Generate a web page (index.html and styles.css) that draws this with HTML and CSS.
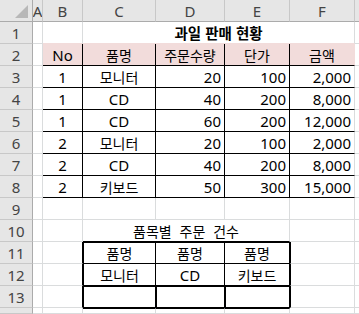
FILE: index.html
```html
<!DOCTYPE html>
<html lang="ko">
<head>
<meta charset="utf-8">
<link rel="stylesheet" href="styles.css">
</head>
<body>
<div class="sheet">
  <!-- header row -->
  <div class="corner"><span class="tri"></span></div>
  <div class="h">A</div><div class="h">B</div><div class="h">C</div><div class="h">D</div><div class="h">E</div><div class="h">F</div><div class="h last"></div>

  <!-- row 1 -->
  <div class="rh">1</div><div class="c"></div><div class="c pinkb"></div>
  <div class="c title pinkb span4">과일 판매 현황</div><div class="c g"></div>

  <!-- row 2 -->
  <div class="rh">2</div><div class="c"></div>
  <div class="c ph ctr br bb">No</div>
  <div class="c ph ctr br bb ko">품명</div>
  <div class="c ph ctr br bb ko">주문수량</div>
  <div class="c ph ctr br bb ko">단가</div>
  <div class="c ph ctr bb ko">금액</div>
  <div class="c g"></div>

  <!-- rows 3-8 -->
  <div class="rh">3</div><div class="c"></div>
  <div class="c ctr br bb">1</div><div class="c ctr br bb ko">모니터</div><div class="c num br bb">20</div><div class="c num br bb">100</div><div class="c num bb">2,000</div><div class="c g"></div>

  <div class="rh">4</div><div class="c"></div>
  <div class="c ctr br bb">1</div><div class="c ctr br bb">CD</div><div class="c num br bb">40</div><div class="c num br bb">200</div><div class="c num bb">8,000</div><div class="c g"></div>

  <div class="rh">5</div><div class="c"></div>
  <div class="c ctr br bb">1</div><div class="c ctr br bb">CD</div><div class="c num br bb">60</div><div class="c num br bb">200</div><div class="c num bb">12,000</div><div class="c g"></div>

  <div class="rh">6</div><div class="c"></div>
  <div class="c ctr br bb">2</div><div class="c ctr br bb ko">모니터</div><div class="c num br bb">20</div><div class="c num br bb">100</div><div class="c num bb">2,000</div><div class="c g"></div>

  <div class="rh">7</div><div class="c"></div>
  <div class="c ctr br bb">2</div><div class="c ctr br bb">CD</div><div class="c num br bb">40</div><div class="c num br bb">200</div><div class="c num bb">8,000</div><div class="c g"></div>

  <div class="rh">8</div><div class="c"></div>
  <div class="c ctr br bb">2</div><div class="c ctr br bb ko">키보드</div><div class="c num br bb">50</div><div class="c num br bb">300</div><div class="c num bb">15,000</div><div class="c g"></div>

  <!-- row 9 -->
  <div class="rh">9</div><div class="c"></div><div class="c"></div><div class="c"></div><div class="c"></div><div class="c"></div><div class="c"></div><div class="c g"></div>

  <!-- row 10 -->
  <div class="rh">10</div><div class="c"></div><div class="c"></div>
  <div class="c ctr span3 bb ko caption">품목별 주문 건수</div>
  <div class="c"></div><div class="c g"></div>

  <!-- row 11 -->
  <div class="rh">11</div><div class="c"></div><div class="c br"></div>
  <div class="c ctr bt bl br bb ko">품명</div>
  <div class="c ctr bt br bb ko">품명</div>
  <div class="c ctr bt br bb ko">품명</div>
  <div class="c bl"></div><div class="c g"></div>

  <!-- row 12 -->
  <div class="rh">12</div><div class="c"></div><div class="c br"></div>
  <div class="c ctr bl br bb ko">모니터</div>
  <div class="c ctr br bb">CD</div>
  <div class="c ctr br bb ko">키보드</div>
  <div class="c bl"></div><div class="c g"></div>

  <!-- row 13 -->
  <div class="rh">13</div><div class="c"></div><div class="c br"></div>
  <div class="c bt bl br bb"></div>
  <div class="c bt bl br bb"></div>
  <div class="c bt bl br bb"></div>
  <div class="c bl"></div><div class="c g"></div>

  <!-- row 14 (partial) -->
  <div class="rh"></div><div class="c"></div><div class="c"></div>
  <div class="c bt"></div><div class="c bt"></div><div class="c bt"></div>
  <div class="c"></div><div class="c g"></div>
</div>
</body>
</html>
```

FILE: styles.css
```css
html, body {
  margin: 0;
  padding: 0;
  background: #ffffff;
  overflow: hidden;
}

.sheet {
  display: grid;
  grid-template-columns: 33px 10px 40px 73px 69px 65px 65px 4px;
  grid-template-rows: repeat(14, 22px) 6px;
  width: 359px;
  height: 314px;
  font-family: "Noto Sans", "Noto Sans CJK KR", sans-serif;
  font-size: 15px;
  color: #000;
  line-height: 20px;
}

.sheet > div {
  box-sizing: border-box;
  white-space: nowrap;
  overflow: hidden;
}

.ko {
  font-family: "Noto Sans CJK KR", sans-serif;
  font-size: 14px;
}
.caption {
  word-spacing: 4px;
}

/* header row */
.corner {
  position: relative;
  background: #e6e6e6;
  border-right: 1px solid #ababab;
  border-bottom: 1px solid #ababab;
}
.tri {
  position: absolute;
  right: 4px;
  bottom: 3px;
  width: 0;
  height: 0;
  border-left: 13px solid transparent;
  border-bottom: 13px solid #b8b8b8;
}

.h {
  background: #e6e6e6;
  border-right: 1px solid #c8c8c8;
  border-bottom: 1px solid #ababab;
  display: flex;
  align-items: center;
  justify-content: center;
  color: #444;
  font-size: 15px;
}
.h.last {
  border-right: none;
}

.rh {
  background: #e6e6e6;
  border-right: 1px solid #ababab;
  border-bottom: 1px solid #c8c8c8;
  display: flex;
  align-items: center;
  justify-content: center;
  color: #444;
  font-size: 15px;
}

/* cells */
.c {
  border-right: 1px solid #dadcdd;
  border-bottom: 1px solid #dadcdd;
  display: flex;
  align-items: center;
  padding: 0 3px;
}
.c.g {
  border-right: none;
}

.ctr { justify-content: center; }
.num { justify-content: flex-end; }

.title {
  justify-content: center;
  font-family: "Noto Sans CJK KR", sans-serif;
  font-weight: bold;
  font-size: 14.5px;
}
.span4 { grid-column: span 4; }
.span3 { grid-column: span 3; }

.ph {
  background: #f2dcdb;
  border-right-color: #f2dcdb;
}
.pinkb { border-bottom-color: #f2dcdb; }

.br { border-right: 1px solid #000; }
.bb { border-bottom: 1px solid #000; }
.bt { border-top: 1px solid #000; }
.bl { border-left: 1px solid #000; }
.ph.bb { border-bottom-color: #000; }
.ph.br { border-right-color: #000; }
```
